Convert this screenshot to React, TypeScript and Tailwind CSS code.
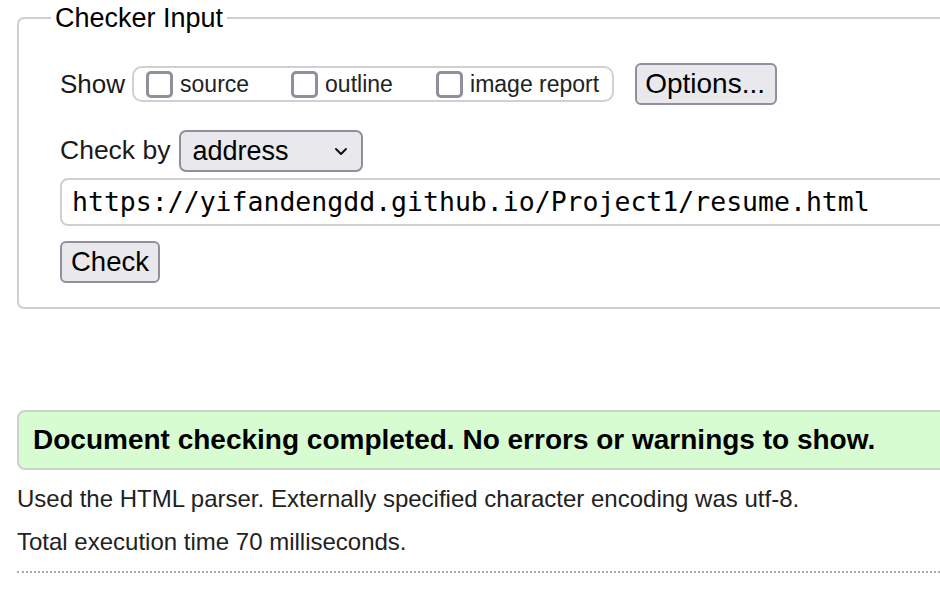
import React from "react";

const sans = { fontFamily: '"Liberation Sans", Arial, sans-serif' };

function Box({ label }: { label: string }) {
  return (
    <label className="flex items-center gap-[7px]">
      <span className="block h-[27px] w-[27px] shrink-0 rounded-[5px] border-[3px] border-[#8f8f9d] bg-white" />
      <span>{label}</span>
    </label>
  );
}

export default function App() {
  return (
    <div className="w-[940px] h-[590px] overflow-hidden bg-white text-[#1a1a1a]" style={sans}>
      <div className="w-[1100px] pl-[17px]">
        <fieldset className="mt-[2px] rounded-[7px] border-2 border-[#cfcfcf] pl-[41px] pr-4 pb-[24px]">
          <legend className="-ml-[9px] px-[4px] text-[27px] leading-[32px] text-black">Checker Input</legend>

          <div className="mt-[29px] flex items-center text-[26px]">
            <span className="mr-[7px]">Show</span>
            <div className="flex h-[36px] items-center rounded-[10px] border-2 border-[#d0d0d0] pl-[12px] pr-[13px] text-[23px] text-[#222]">
              <div className="w-[145px]"><Box label="source" /></div>
              <div className="w-[145px]"><Box label="outline" /></div>
              <Box label="image report" />
            </div>
            <button
              type="button"
              className="ml-[21px] h-[42px] rounded-[6px] border-2 border-[#8f8f9d] bg-[#e9e9ed] pl-[8px] pr-[10px] text-[28px] leading-none text-black"
            >
              Options...
            </button>
          </div>

          <div className="mt-[25px] flex items-center text-[26.5px]">
            <span className="mr-[9px]">Check by</span>
            <div className="flex h-[42px] w-[184px] items-center justify-between rounded-[7px] border-2 border-[#8f8f9d] bg-[#e9e9ed] pl-[11px] pr-[13px] text-[27px] text-black">
              <span>address</span>
              <svg width="14" height="9" viewBox="0 0 14 9" fill="none">
                <path d="M2 2l5 5 5-5" stroke="#111" strokeWidth="2" strokeLinecap="round" strokeLinejoin="round" />
              </svg>
            </div>
          </div>

          <div
            className="mt-[6px] flex h-[48px] items-center rounded-[8px] border-2 border-[#cfcfcf] pl-[10px] text-[26.5px] text-black"
            style={{ fontFamily: '"DejaVu Sans Mono", "Liberation Mono", monospace' }}
          >
            https://yifandengdd.github.io/Project1/resume.html
          </div>

          <button
            type="button"
            className="mt-[15px] h-[42px] rounded-[6px] border-2 border-[#8f8f9d] bg-[#e9e9ed] px-[9px] text-[27.5px] leading-none text-black"
          >
            Check
          </button>
        </fieldset>

        <div className="mt-[101px] flex h-[60px] items-center rounded-[8px] border-2 border-[#cfcfcf] bg-[#d8fcd2] pl-[14px] text-[28px] font-bold text-black">
          Document checking completed. No errors or warnings to show.
        </div>

        <p className="mt-[14px] text-[24px] leading-[30px] text-[#222]">
          Used the HTML parser. Externally specified character encoding was utf-8.
        </p>
        <p className="mt-[13px] text-[24px] leading-[30px] text-[#222]">Total execution time 70 milliseconds.</p>
        <div className="mt-[14px] w-[923px] border-t-2 border-dotted border-[#aaa]" />
      </div>
    </div>
  );
}
